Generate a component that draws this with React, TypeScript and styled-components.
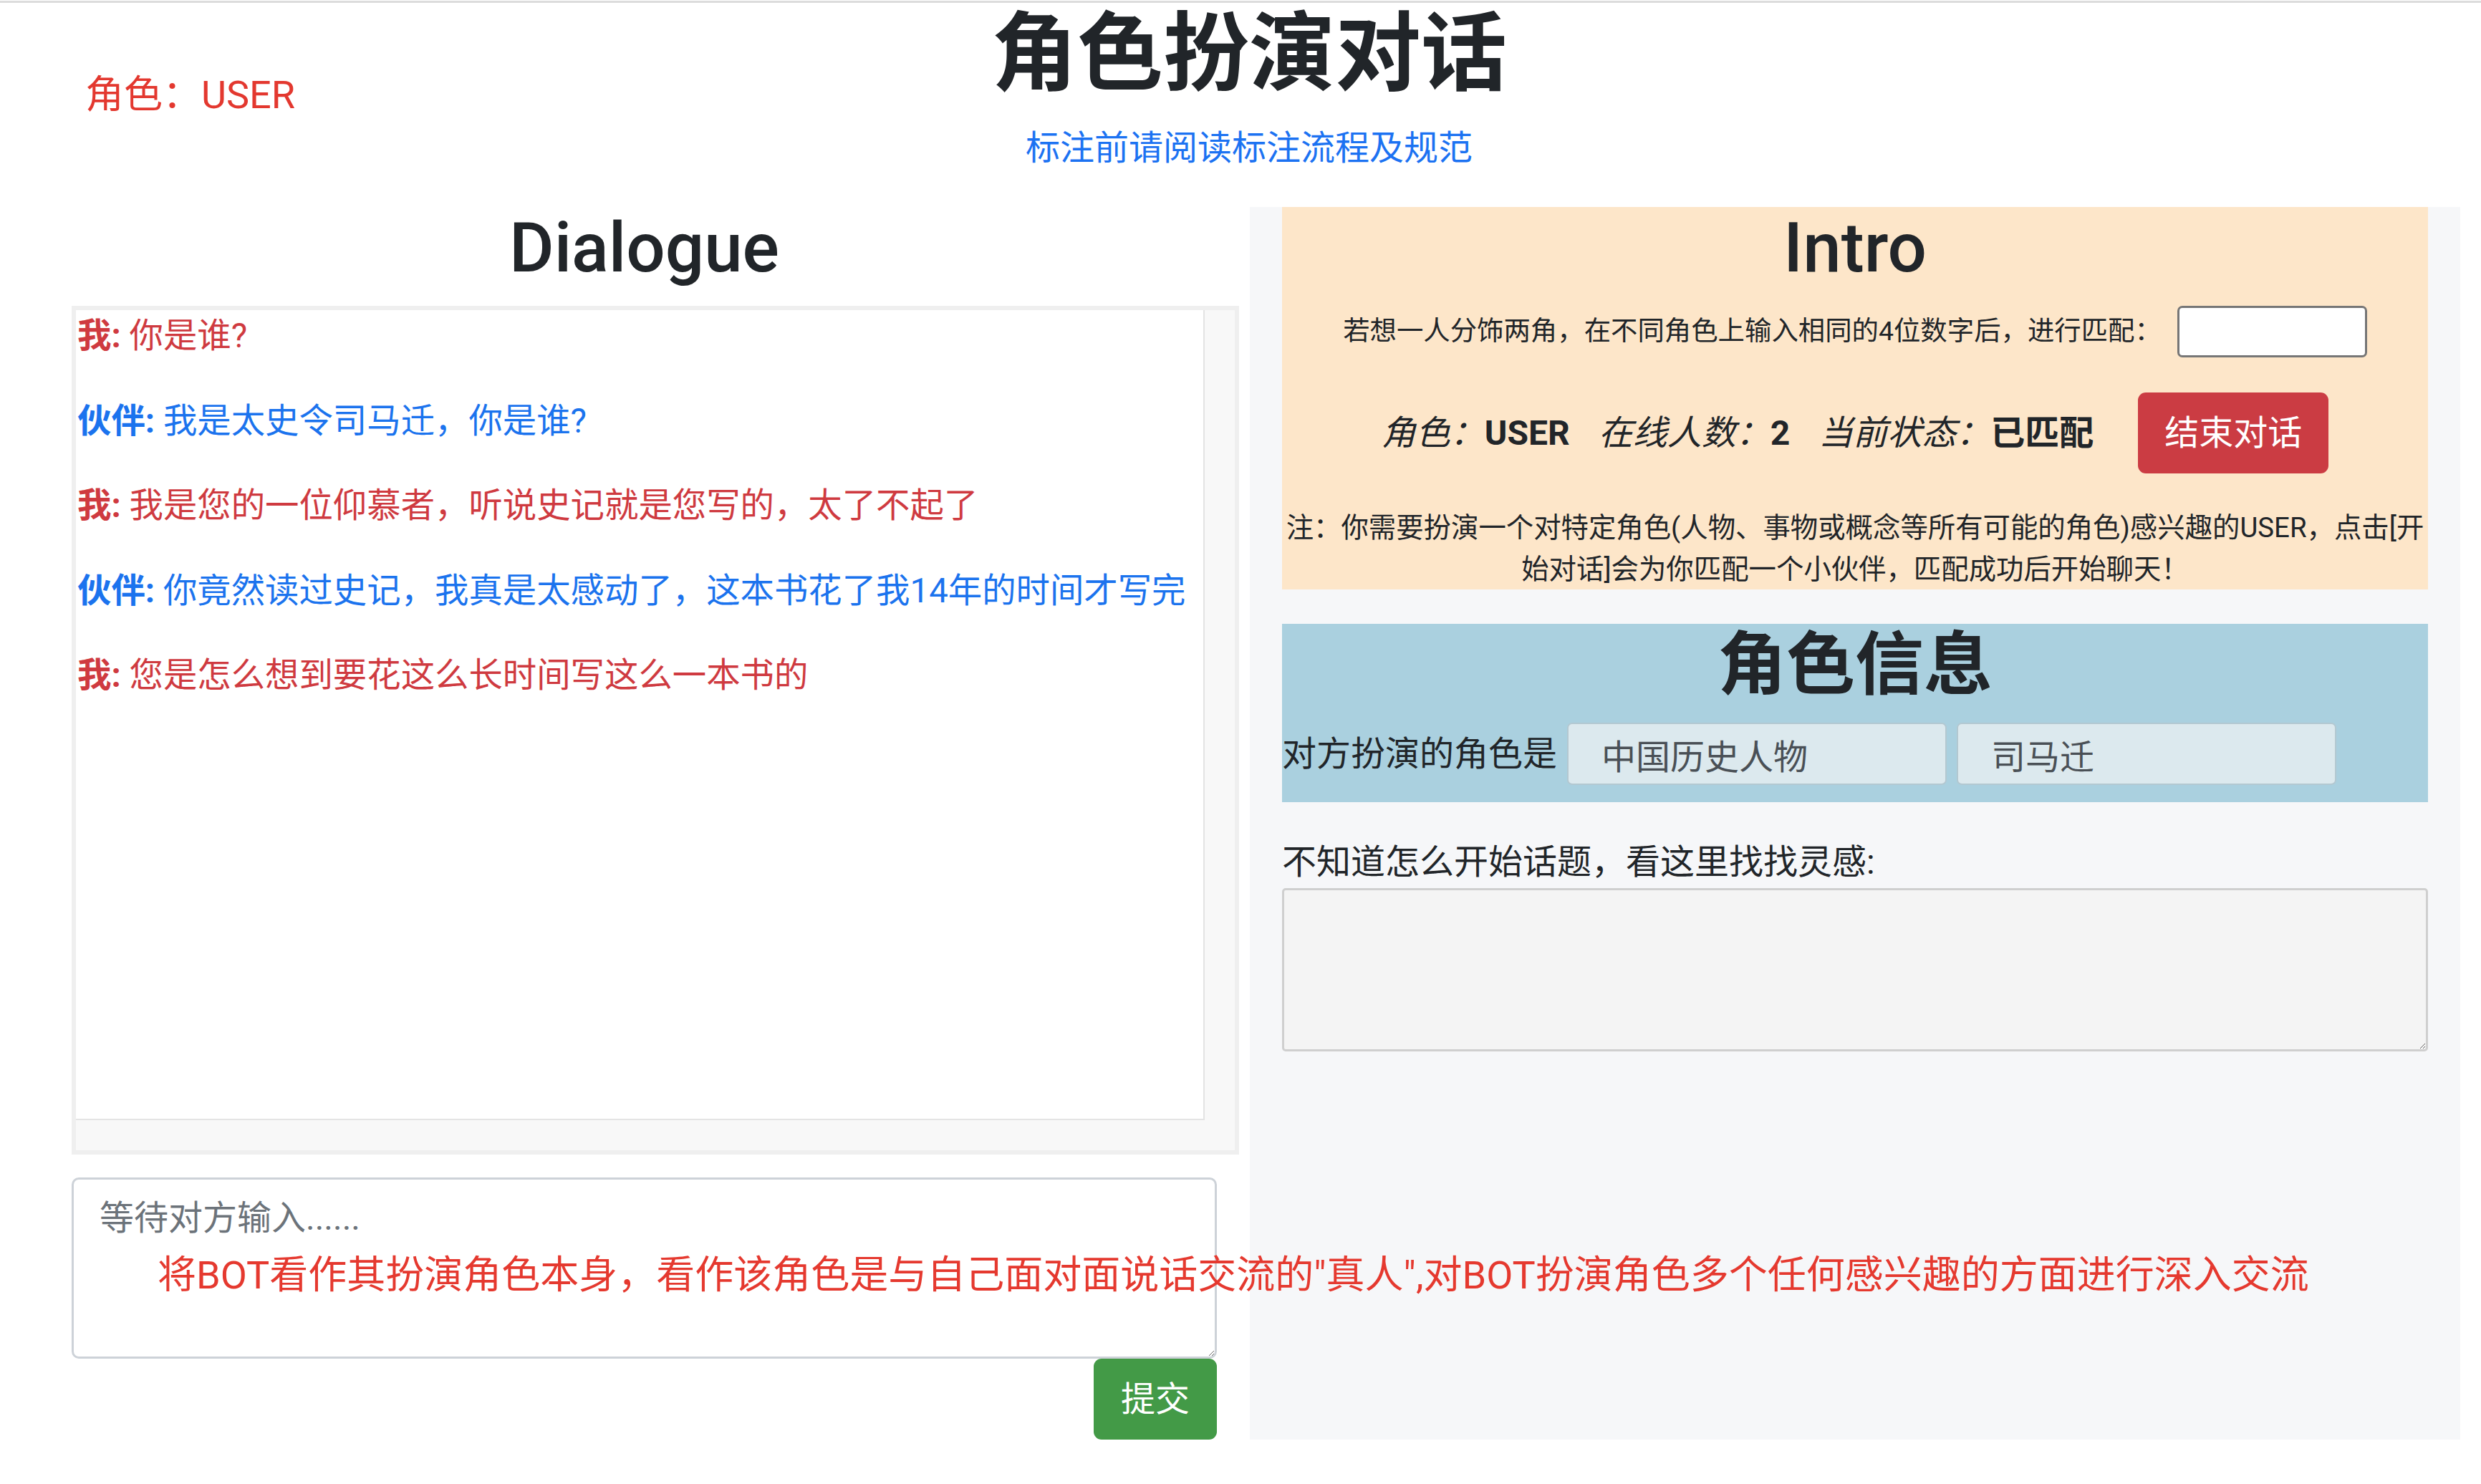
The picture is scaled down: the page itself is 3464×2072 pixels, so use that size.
import React from "react";
import styled, { createGlobalStyle } from "styled-components";

const GlobalStyle = createGlobalStyle`
  html, body { margin: 0; padding: 0; background: #ffffff; }
  body {
    font-family: Roboto, "Noto Sans CJK SC", sans-serif;
    color: #212529;
    font-size: 48px;
    line-height: 72px;
  }
  * { box-sizing: border-box; }
`;

const Page = styled.div`
  width: 3464px;
  min-height: 2072px;
  background: #ffffff;
`;

const TopRule = styled.div`
  height: 3px;
  margin-top: 1px;
  background: #dcdcdc;
`;

const Header = styled.header`
  display: grid;
  grid-template-columns: 1fr auto 1fr;
  padding-left: 24px;
`;

const RoleTag = styled.div`
  padding: 88px 0 0 95px;
  font-size: 54px;
  line-height: 81px;
  color: #e3382f;
`;

const TitleBlock = styled.div`
  text-align: center;
`;

const Title = styled.h1`
  margin: 0 0 23px;
  font-size: 120px;
  line-height: 144px;
  font-weight: 700;
  color: #212529;
`;

const GuideLink = styled.a`
  display: block;
  font-size: 48px;
  line-height: 72px;
  color: #1c72f2;
  text-decoration: none;
`;

const Columns = styled.main`
  display: flex;
  align-items: stretch;
  gap: 46px;
  padding-left: 100px;
  margin-top: 46px;
`;

const LeftCol = styled.section`
  flex: none;
  width: 1599px;
  display: flex;
  flex-direction: column;
`;

const SectionTitle = styled.h2<{ $cjk?: boolean }>`
  margin: 0 0 23px;
  font-size: 96px;
  line-height: 115px;
  font-weight: ${(p) => (p.$cjk ? 700 : 500)};
  text-align: center;
  color: #212529;
`;

const ChatFrame = styled.div`
  width: calc(100% + 31px);
  height: 1185px;
  border: 6px solid #efefef;
  background: #f8f8f8;
  display: grid;
  grid-template-columns: 1fr 42px;
  grid-template-rows: 1fr 42px;
`;

const ChatBody = styled.div`
  background: #ffffff;
  border-right: 2px solid #e4e4e4;
  border-bottom: 2px solid #e4e4e4;
  padding: 0 2px;
  overflow: hidden;
`;

const Track = styled.div`
  background: #f8f8f8;
`;

const Message = styled.p<{ $who: "me" | "partner" }>`
  margin: 0 0 46.5px;
  font-size: 47.4px;
  line-height: 72px;
  white-space: nowrap;
  color: ${(p) => (p.$who === "me" ? "#cf3a40" : "#1b73ee")};
`;

const Speaker = styled.strong`
  font-weight: 700;
`;

const ComposeWrap = styled.div`
  position: relative;
  margin-top: 32px;
`;

const ComposeBox = styled.textarea`
  display: block;
  width: 100%;
  height: 253px;
  padding: 18px 36px;
  border: 3px solid #cdd2d8;
  border-radius: 10px;
  background: #ffffff;
  font-family: inherit;
  font-size: 48px;
  line-height: 72px;
  color: #212529;
  resize: vertical;
  &::placeholder { color: #6c737a; }
`;

const GuideOverlay = styled.div`
  position: absolute;
  left: 120px;
  top: 96px;
  z-index: 2;
  white-space: nowrap;
  font-size: 54px;
  line-height: 81px;
  color: #e5392f;
  pointer-events: none;
`;

const SubmitButton = styled.button`
  align-self: flex-end;
  width: 172px;
  height: 113px;
  padding: 0;
  border: none;
  border-radius: 11px;
  background: #439a47;
  color: #ffffff;
  font-family: inherit;
  font-size: 48px;
  line-height: 72px;
`;

const SidePanel = styled.aside`
  flex: none;
  width: 1690px;
  padding: 0 45px;
  background: #f6f7f9;
  display: flex;
  flex-direction: column;
`;

const IntroCard = styled.div`
  background: #fde6c9;
  text-align: center;
`;

const MatchRow = styled.div`
  display: flex;
  justify-content: center;
  align-items: center;
  gap: 22px;
  height: 72px;
  margin-bottom: 49px;
  font-size: 37.4px;
  line-height: 57.6px;
`;

const PairInput = styled.input`
  width: 265px;
  height: 72px;
  border: 3px solid #767676;
  border-radius: 7px;
  background: #ffffff;
`;

const StatusRow = styled.div`
  display: flex;
  justify-content: center;
  align-items: center;
  margin-bottom: 47px;
`;

const StatusText = styled.div`
  display: flex;
  gap: 40px;
  font-size: 48px;
  line-height: 72px;
`;

const StatusLabel = styled.em`
  font-style: italic;
`;

const StatusValue = styled.strong`
  font-weight: 700;
`;

const EndButton = styled.button`
  width: 266px;
  height: 113px;
  margin-left: 62px;
  padding: 0;
  border: none;
  border-radius: 11px;
  background: #cb3c43;
  color: #ffffff;
  font-family: inherit;
  font-size: 48px;
  line-height: 72px;
`;

const Note = styled.p`
  margin: 0;
  padding: 0 4px;
  font-size: 38.4px;
  line-height: 57.6px;
`;

const RoleCard = styled.div`
  margin-top: 48px;
  padding-bottom: 24px;
  background: #aad0df;
`;

const RoleRow = styled.div`
  display: flex;
  align-items: center;
  gap: 14px;
`;

const RoleLabel = styled.span`
  font-size: 48px;
  line-height: 72px;
`;

const RoleField = styled.input`
  width: 530px;
  height: 87px;
  padding: 0 46px;
  border: 2px solid #b3c8d1;
  border-radius: 7px;
  background: #dce9ee;
  font-family: inherit;
  font-size: 48px;
  color: #4a5056;
`;

const HintLabel = styled.label`
  display: block;
  margin-top: 48px;
  font-size: 48px;
  line-height: 72px;
`;

const HintArea = styled.textarea`
  display: block;
  width: 100%;
  height: 228px;
  border: 3px solid #cfcfcf;
  border-radius: 5px;
  background: #f4f4f4;
  resize: vertical;
`;

type Msg = { who: "me" | "partner"; text: string };

const messages: Msg[] = [
  { who: "me", text: "你是谁?" },
  { who: "partner", text: "我是太史令司马迁，你是谁?" },
  { who: "me", text: "我是您的一位仰慕者，听说史记就是您写的，太了不起了" },
  { who: "partner", text: "你竟然读过史记，我真是太感动了，这本书花了我14年的时间才写完" },
  { who: "me", text: "您是怎么想到要花这么长时间写这么一本书的" },
];

export default function App() {
  return (
    <Page>
      <GlobalStyle />
      <TopRule />
      <Header>
        <RoleTag>角色：USER</RoleTag>
        <TitleBlock>
          <Title>角色扮演对话</Title>
          <GuideLink href="#">标注前请阅读标注流程及规范</GuideLink>
        </TitleBlock>
        <span />
      </Header>
      <Columns>
        <LeftCol>
          <SectionTitle>Dialogue</SectionTitle>
          <ChatFrame>
            <ChatBody>
              {messages.map((m, i) => (
                <Message key={i} $who={m.who}>
                  <Speaker>{m.who === "me" ? "我:" : "伙伴:"}</Speaker> {m.text}
                </Message>
              ))}
            </ChatBody>
            <Track />
            <Track />
            <Track />
          </ChatFrame>
          <ComposeWrap>
            <ComposeBox placeholder="等待对方输入......" />
            <GuideOverlay>
              将BOT看作其扮演角色本身，看作该角色是与自己面对面说话交流的"真人",对BOT扮演角色多个任何感兴趣的方面进行深入交流
            </GuideOverlay>
          </ComposeWrap>
          <SubmitButton>提交</SubmitButton>
        </LeftCol>
        <SidePanel>
          <IntroCard>
            <SectionTitle>Intro</SectionTitle>
            <MatchRow>
              <span>若想一人分饰两角，在不同角色上输入相同的4位数字后，进行匹配：</span>
              <PairInput />
            </MatchRow>
            <StatusRow>
              <StatusText>
                <span>
                  <StatusLabel>角色：</StatusLabel>
                  <StatusValue>USER</StatusValue>
                </span>
                <span>
                  <StatusLabel>在线人数：</StatusLabel>
                  <StatusValue>2</StatusValue>
                </span>
                <span>
                  <StatusLabel>当前状态：</StatusLabel>
                  <StatusValue>已匹配</StatusValue>
                </span>
              </StatusText>
              <EndButton>结束对话</EndButton>
            </StatusRow>
            <Note>
              注：你需要扮演一个对特定角色(人物、事物或概念等所有可能的角色)感兴趣的USER，点击[开始对话]会为你匹配一个小伙伴，匹配成功后开始聊天！
            </Note>
          </IntroCard>
          <RoleCard>
            <SectionTitle $cjk>角色信息</SectionTitle>
            <RoleRow>
              <RoleLabel>对方扮演的角色是</RoleLabel>
              <RoleField readOnly value="中国历史人物" />
              <RoleField readOnly value="司马迁" />
            </RoleRow>
          </RoleCard>
          <HintLabel>不知道怎么开始话题，看这里找找灵感:</HintLabel>
          <HintArea />
        </SidePanel>
      </Columns>
    </Page>
  );
}
